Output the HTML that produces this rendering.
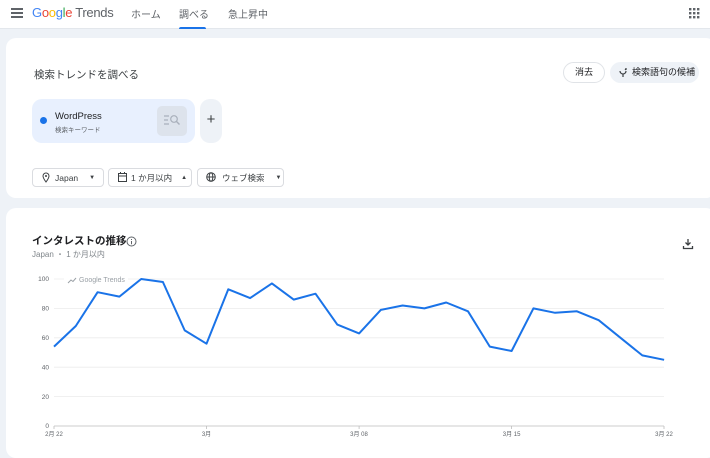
<!DOCTYPE html><html><head><meta charset="utf-8"><style>
*{box-sizing:border-box;margin:0;padding:0}
body{width:710px;height:446px;overflow:hidden;background:#eef2f7;font-family:"Liberation Sans","Noto Sans CJK JP",sans-serif;color:#202124;position:relative}
.abs{position:absolute;white-space:nowrap}
.nav{left:0;top:0;width:710px;height:29px;background:#fff;border-bottom:1px solid #e3e7ec}
.card{background:#fff;border-radius:10px}
.pill{border:1px solid #dadce0;border-radius:4px;height:19px;font-size:8.5px;color:#3c4043;display:flex;align-items:center}
</style></head><body>
<div class="abs nav">
 <div class="abs" style="left:11px;top:8px;width:12px;height:2px;background:#5f6368;box-shadow:0 4px 0 #5f6368,0 8px 0 #5f6368"></div>
 <div class="abs" style="left:32px;top:5px;font-size:13px;letter-spacing:-0.3px"><span style="color:#4285f4">G</span><span style="color:#ea4335">o</span><span style="color:#fbbc05">o</span><span style="color:#4285f4">g</span><span style="color:#34a853">l</span><span style="color:#ea4335">e</span> <span style="color:#5f6368">Trends</span></div>
 <div class="abs" style="left:131px;top:6px;font-size:10px;color:#5f6368">ホーム</div>
 <div class="abs" style="left:179px;top:6px;font-size:10px;color:#5f6368">調べる</div>
 <div class="abs" style="left:179px;top:27px;width:27px;height:2px;background:#1a73e8;border-radius:2px 2px 0 0"></div>
 <div class="abs" style="left:228px;top:6px;font-size:10px;color:#5f6368">急上昇中</div>
 <svg class="abs" style="left:689px;top:8px" width="11" height="11"><g fill="#5f6368"><rect x="0" y="0" width="2.4" height="2.4"/><rect x="4" y="0" width="2.4" height="2.4"/><rect x="8" y="0" width="2.4" height="2.4"/><rect x="0" y="4" width="2.4" height="2.4"/><rect x="4" y="4" width="2.4" height="2.4"/><rect x="8" y="4" width="2.4" height="2.4"/><rect x="0" y="8" width="2.4" height="2.4"/><rect x="4" y="8" width="2.4" height="2.4"/><rect x="8" y="8" width="2.4" height="2.4"/></g></svg>
</div>
<div class="abs card" style="left:6px;top:38px;width:710px;height:160px"></div>
<div class="abs" style="left:34px;top:67px;font-size:10.5px;color:#3c4043">検索トレンドを調べる</div>
<div class="abs" style="left:563px;top:62px;width:42px;height:21px;border:1px solid #e0e3e7;border-radius:11px;font-size:9px;text-align:center;line-height:19px">消去</div>
<div class="abs" style="left:610px;top:62px;width:89px;height:21px;background:#eef2f7;border-radius:11px;font-size:9px;line-height:21px;padding-left:22px">検索語句の候補</div>
<svg class="abs" style="left:619px;top:68px" width="9" height="10"><path d="M1 3a3 3 0 1 0 6 0M4 6v3M6 1l1 1M7 0v2" stroke="#3c4043" fill="none" stroke-width="1.2"/></svg>
<div class="abs" style="left:32px;top:99px;width:163px;height:44px;background:#e8f0fe;border-radius:10px"></div>
<div class="abs" style="left:40px;top:117px;width:7px;height:7px;border-radius:50%;background:#1a73e8"></div>
<div class="abs" style="left:55px;top:111px;font-size:9.5px">WordPress</div>
<div class="abs" style="left:55px;top:124px;font-size:6.5px;color:#5f6368">検索キーワード</div>
<div class="abs" style="left:157px;top:106px;width:30px;height:30px;background:#dde3ec;border-radius:5px"></div>
<svg class="abs" style="left:163px;top:114px" width="18" height="12"><path d="M1 2h5M1 6h4M1 10h5" stroke="#a9b0bb" stroke-width="1.2"/><circle cx="11" cy="5" r="3.3" stroke="#a9b0bb" fill="none" stroke-width="1.2"/><path d="M13.5 7.5l3 3" stroke="#a9b0bb" stroke-width="1.4"/></svg>
<div class="abs" style="left:200px;top:99px;width:22px;height:44px;background:#eef2f7;border-radius:10px;text-align:center;line-height:42px;font-size:15px;color:#3c4043">+</div>
<div class="abs pill" style="left:32px;top:168px;width:72px;padding-left:22px">Japan<span style="margin-left:11px;font-size:6px">▼</span></div>
<svg class="abs" style="left:42px;top:172px" width="8" height="11"><path d="M4 10C1 6 1 5 1 4a3 3 0 0 1 6 0c0 1 0 2-3 6z" stroke="#3c4043" fill="none"/><circle cx="4" cy="4" r="1" fill="#3c4043"/></svg>
<div class="abs pill" style="left:108px;top:168px;width:84px;padding-left:22px">1 か月以内<span style="margin-left:9px;font-size:6px">▲</span></div>
<svg class="abs" style="left:118px;top:172px" width="9" height="10"><rect x="0.5" y="1.5" width="8" height="8" stroke="#3c4043" fill="none"/><path d="M0.5 4h8M2.5 0v2M6.5 0v2" stroke="#3c4043"/></svg>
<div class="abs pill" style="left:197px;top:168px;width:87px;padding-left:24px">ウェブ検索<span style="margin-left:11px;font-size:6px">▼</span></div>
<svg class="abs" style="left:206px;top:172px" width="10" height="10"><circle cx="5" cy="5" r="4.3" stroke="#3c4043" fill="none"/><ellipse cx="5" cy="5" rx="1.8" ry="4.3" stroke="#3c4043" fill="none"/><path d="M1 5h8" stroke="#3c4043"/></svg>

<div class="abs card" style="left:6px;top:208px;width:710px;height:250px"></div>
<div class="abs" style="left:32px;top:233px;font-size:10.5px;font-weight:bold;color:#202124">インタレストの推移</div>
<svg class="abs" style="left:126px;top:236px" width="11" height="11"><circle cx="5.5" cy="5.5" r="4.5" stroke="#5f6368" fill="none"/><path d="M5.5 5v3.2M5.5 3v1" stroke="#5f6368"/></svg>
<div class="abs" style="left:32px;top:249px;font-size:8px;color:#80868b">Japan ・ 1 か月以内</div>
<svg class="abs" style="left:682px;top:238px" width="12" height="12"><path d="M6 1v6M3.5 4.5L6 7l2.5-2.5M1.5 8v2.5h9V8" stroke="#3c4043" fill="none" stroke-width="1.3"/></svg>
<svg class="abs" style="left:0;top:0" width="710" height="446">
<g stroke="#ececec" stroke-width="0.8"><path d="M54 279H664M54 308.4H664M54 337.8H664M54 367.2H664M54 396.6H664"/></g>
<rect x="64" y="273" width="64" height="11" fill="#fff"/>
<path d="M68 283l3-3 2 1.5 3-3.5" stroke="#9aa0a6" fill="none"/>
<text x="79" y="282" font-size="7" fill="#9aa0a6" font-family="Liberation Sans">Google Trends</text>
<path d="M54 426H664M54 426v3M206.5 426v3M359.1 426v3M511.6 426v3M664 426v3" stroke="#bdbdbd" stroke-width="0.8"/>
<g font-size="6.5" fill="#5f6368" font-family="Liberation Sans,Noto Sans CJK JP,sans-serif" text-anchor="end">
<text x="49" y="281">100</text><text x="49" y="310.5">80</text><text x="49" y="340">60</text><text x="49" y="369.5">40</text><text x="49" y="399">20</text><text x="49" y="428">0</text></g>
<g font-size="6" fill="#5f6368" font-family="Liberation Sans,Noto Sans CJK JP,sans-serif" text-anchor="middle">
<text x="54" y="436">2月 22</text><text x="206.5" y="436">3月</text><text x="359" y="436">3月 08</text><text x="511.6" y="436">3月 15</text><text x="664" y="436">3月 22</text></g>
<polyline fill="none" stroke="#1a73e8" stroke-width="2" stroke-linejoin="round" points="54,346.6 75.8,326 97.6,292.2 119.4,296.6 141.2,279 162.9,282 184.7,330.4 206.5,343.7 228.3,289.3 250.1,298.1 271.9,283.4 293.7,299.6 315.5,293.7 337.3,324.6 359.1,333.4 380.8,309.9 402.6,305.5 424.4,308.4 446.2,302.5 468,311.3 489.8,346.6 511.6,351 533.4,308.4 555.1,312.8 576.9,311.3 598.7,320.2 620.5,337.8 642.3,355.4 664.1,359.8"/>
</svg>
</body></html>
